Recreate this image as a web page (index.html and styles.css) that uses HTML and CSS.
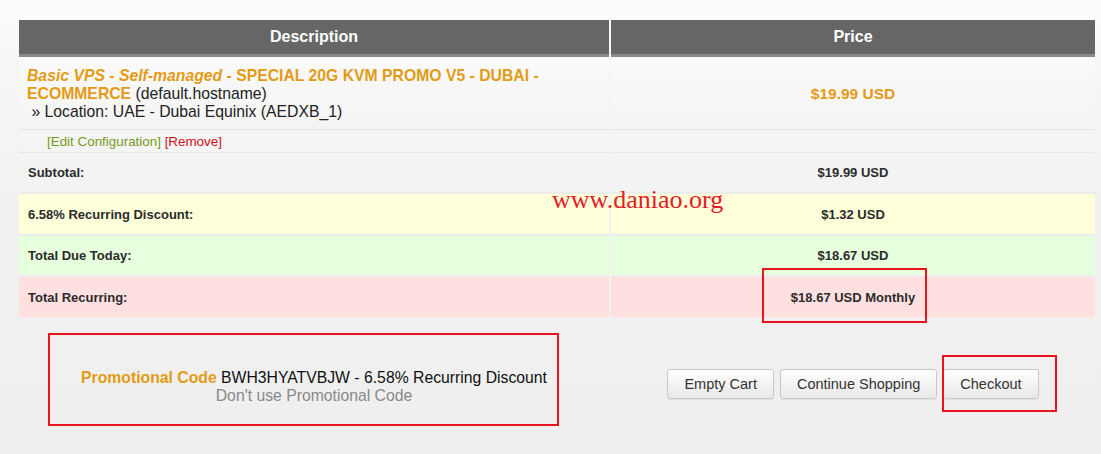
FILE: index.html
```html
<!DOCTYPE html>
<html>
<head>
<meta charset="utf-8">
<link rel="stylesheet" href="styles.css">
</head>
<body>
<div class="page">
  <table class="cart">
    <thead>
      <tr><th class="c-desc">Description</th><th class="c-price">Price</th></tr>
    </thead>
    <tbody>
      <tr class="product">
        <td class="desc">
          <span class="pname"><em>Basic VPS - Self-managed</em> - SPECIAL 20G KVM PROMO V5 - DUBAI - ECOMMERCE</span> (default.hostname)<br>
          &nbsp;» Location: UAE - Dubai Equinix (AEDXB_1)
        </td>
        <td class="price">$19.99 USD</td>
      </tr>
      <tr class="actions">
        <td class="links"><span class="edit">[Edit Configuration]</span> <span class="remove">[Remove]</span></td>
        <td></td>
      </tr>
      <tr class="sum subtotal"><td class="label">Subtotal:</td><td class="amount">$19.99 USD</td></tr>
      <tr class="sum discount"><td class="label">6.58% Recurring Discount:</td><td class="amount">$1.32 USD</td></tr>
      <tr class="sum due"><td class="label">Total Due Today:</td><td class="amount">$18.67 USD</td></tr>
      <tr class="sum recurring"><td class="label">Total Recurring:</td><td class="amount">$18.67 USD Monthly</td></tr>
    </tbody>
  </table>

  <div class="bottom">
    <div class="promo">
      <div><span class="promo-label">Promotional Code</span> BWH3HYATVBJW - 6.58% Recurring Discount</div>
      <div class="promo-remove">Don't use Promotional Code</div>
    </div>
    <div class="buttons">
      <button class="btn">Empty Cart</button>
      <button class="btn">Continue Shopping</button>
      <button class="btn">Checkout</button>
    </div>
  </div>

  <div class="watermark">www.daniao.org</div>
  <div class="mark mark-promo"></div>
  <div class="mark mark-recurring"></div>
  <div class="mark mark-checkout"></div>
</div>
</body>
</html>
```
FILE: styles.css
```css
html, body {
  margin: 0;
  padding: 0;
}
body {
  background: linear-gradient(#fcfcfc 0, #f7f7f7 60px, #f1f1f1 200px, #efefef 100%);
  font-family: "Liberation Sans", Arial, sans-serif;
  color: #222;
  width: 1101px;
  height: 454px;
  overflow: hidden;
}
.page {
  position: relative;
  padding: 20px 0 0 17px;
  height: 434px;
}
.cart {
  border-collapse: separate;
  border-spacing: 2px 0;
  width: 1080px;
  table-layout: fixed;
}
.c-desc { width: 590px; }
.c-price { width: 484px; }
.cart th {
  background: #666;
  color: #fff;
  font-weight: bold;
  font-size: 16px;
  height: 34px;
  padding: 0;
  border-bottom: 3px solid #8a8a8a;
  text-align: center;
  vertical-align: middle;
}
.cart td {
  padding: 0;
  vertical-align: middle;
}
.product td {
  height: 70px;
  padding-top: 2px;
  background: linear-gradient(#fafafa, #f4f4f4);
  border-bottom: 1px solid #e4e4e4;
}
.desc {
  padding-left: 8px !important;
  padding-right: 8px !important;
  font-size: 15.75px;
  line-height: 18px;
  color: #222;
}
.pname {
  color: #e39b16;
  font-weight: bold;
}
.pname em { font-style: italic; }
.price {
  text-align: center;
  color: #e39b16;
  font-weight: bold;
  font-size: 15.5px;
}
.actions td {
  height: 22px;
  background: #f4f4f4;
  border-bottom: 1px solid #e6e6e6;
}
.links {
  padding-left: 28px !important;
  font-size: 13.4px;
}
.edit { color: #779a1c; }
.remove { color: #d0101c; }
.sum td {
  height: 40px;
  font-size: 13px;
  font-weight: bold;
  color: #2b2b2b;
  border-bottom: 2px solid #ececec;
}
.sum .label { padding-left: 9px; }
.sum .amount { text-align: center; }
.subtotal td { background: #f3f3f3; height: 39px; }
.discount td { background: #ffffd9; height: 40px; }
.due td { background: #e6ffdc; height: 39px; }
.recurring td { background: #ffe0e1; height: 40px; border-bottom: 0; }

.bottom {
  display: flex;
  align-items: center;
  height: 134px;
  padding-left: 2px;
}
.promo {
  width: 590px;
  text-align: center;
  font-size: 15.75px;
  line-height: 18px;
  color: #111;
  padding-top: 6px;
}
.promo-label {
  color: #e39b16;
  font-weight: bold;
}
.promo-remove { color: #888; }
.buttons {
  width: 484px;
  margin-left: 2px;
  display: flex;
  justify-content: center;
  gap: 6px;
}
.btn {
  font-family: "Liberation Sans", Arial, sans-serif;
  font-size: 14.5px;
  color: #333;
  height: 30px;
  padding: 0 16px;
  border: 1px solid #c8c8c8;
  border-radius: 3px;
  background: linear-gradient(#ffffff, #e8e8e8);
  box-shadow: 0 1px 1px rgba(0,0,0,0.06);
}
.watermark {
  position: absolute;
  left: 552px;
  top: 185px;
  font-family: "Liberation Serif", "Times New Roman", serif;
  font-size: 26px;
  color: #e3202a;
}
.mark {
  position: absolute;
  border: 2px solid #e8131c;
  box-sizing: border-box;
}
.mark-promo { left: 48px; top: 333px; width: 511px; height: 93px; }
.mark-recurring { left: 762px; top: 268px; width: 165px; height: 55px; }
.mark-checkout { left: 942px; top: 355px; width: 115px; height: 57px; }
```
